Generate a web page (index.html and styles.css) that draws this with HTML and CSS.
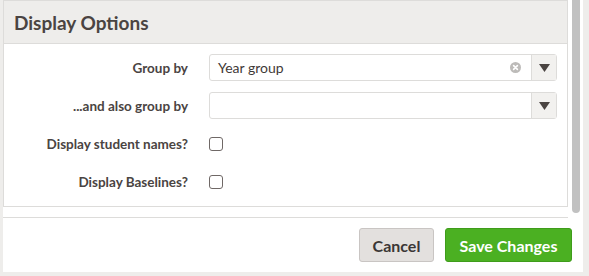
FILE: index.html
```html
<!DOCTYPE html>
<html>
<head>
<meta charset="utf-8">
<link rel="stylesheet" href="styles.css">
</head>
<body>
<div class="modal">
  <div class="scroll-area">
    <div class="scroll-content">
      <div class="panel">
        <div class="panel-header"><h2 class="panel-title">Display Options</h2></div>
        <div class="panel-body">
          <div class="form-row">
            <label class="form-label">Group by</label>
            <div class="select">
              <span class="select-value">Year group</span>
              <span class="select-clear">
                <svg width="11" height="11" viewBox="0 0 11 11"><circle cx="5.5" cy="5.5" r="5.5" fill="#bdbbb9"/><path d="M3.6 3.6 L7.4 7.4 M7.4 3.6 L3.6 7.4" stroke="#fff" stroke-width="1.6" stroke-linecap="round"/></svg>
              </span>
              <span class="select-arrow"><svg width="11" height="8" viewBox="0 0 11 8"><path d="M0 0 H11 L5.5 8 Z" fill="#4a4442"/></svg></span>
            </div>
          </div>
          <div class="form-row">
            <label class="form-label">...and also group by</label>
            <div class="select">
              <span class="select-value"></span>
              <span class="select-arrow"><svg width="11" height="8" viewBox="0 0 11 8"><path d="M0 0 H11 L5.5 8 Z" fill="#4a4442"/></svg></span>
            </div>
          </div>
          <div class="form-row">
            <label class="form-label">Display student names?</label>
            <span class="checkbox"></span>
          </div>
          <div class="form-row">
            <label class="form-label">Display Baselines?</label>
            <span class="checkbox"></span>
          </div>
        </div>
      </div>
    </div>
    <div class="scrollbar"><div class="scroll-thumb"></div></div>
  </div>
  <div class="footer">
    <button class="btn btn-cancel">Cancel</button>
    <button class="btn btn-save">Save Changes</button>
  </div>
</div>
</body>
</html>
```
FILE: styles.css
```css
* { box-sizing: border-box; }
html, body { margin: 0; padding: 0; }
body {
  background: #eeedeb;
  font-family: "Lato", "Open Sans", sans-serif;
  color: #4a4442;
  width: 589px;
  height: 276px;
  overflow: hidden;
}
.modal {
  margin-left: 3px;
  width: 580px;
  height: 272px;
  background: #fff;
  display: flex;
  flex-direction: column;
}
.scroll-area {
  display: flex;
  height: 218px;
}
.scroll-content {
  width: 565px;
  padding-bottom: 10px;
  border-bottom: 1px solid #dddcda;
}
.panel {
  border: 1px solid #dddcda;
  height: 207px;
}
.panel-header {
  height: 43px;
  background: #eeedeb;
  border-bottom: 1px solid #dddcda;
  display: flex;
  align-items: center;
  padding-left: 10px;
  padding-top: 1px;
}
.panel-title {
  margin: 0;
  font-size: 19px;
  font-weight: 700;
  color: #4a4442;
}
.panel-body {
  padding: 10px 10px 10px 0;
  display: flex;
  flex-direction: column;
  gap: 11px;
}
.form-row {
  display: flex;
  align-items: center;
  height: 27px;
}
.form-label {
  width: 184px;
  text-align: right;
  font-size: 13.5px;
  font-weight: 700;
  color: #4a4442;
  margin-right: 21px;
}
.select {
  flex: 1;
  height: 27px;
  border: 1px solid #dddcda;
  border-radius: 3px;
  display: flex;
  align-items: center;
  background: #fff;
}
.select-value {
  flex: 1;
  padding-left: 8px;
  font-size: 14px;
  color: #3f3a38;
}
.select-clear {
  display: flex;
  width: 16px;
  margin-right: 5px;
}
.select-arrow {
  width: 25px;
  height: 100%;
  background: #f2f1ef;
  border-left: 1px solid #dddcda;
  display: flex;
  align-items: center;
  justify-content: center;
}
.checkbox {
  width: 14px;
  height: 14px;
  border: 1.5px solid #6f6866;
  border-radius: 3px;
  background: #fff;
}
.scrollbar {
  width: 15px;
  padding: 0 3px 0 4px;
}
.scroll-thumb {
  width: 8px;
  height: 213px;
  background: #c1c1c1;
  border-radius: 0 0 4px 4px;
}
.footer {
  flex: 1;
  display: flex;
  justify-content: flex-end;
  align-items: center;
  gap: 11px;
  padding-right: 11px;
}
.btn {
  height: 34px;
  border-radius: 3px;
  font-family: inherit;
  font-size: 16px;
  font-weight: 700;
  padding: 0 8px;
  cursor: pointer;
}
.btn-cancel {
  width: 75px;
  background: #e3e0de;
  border: 1px solid #c9c5c3;
  color: #3b3736;
}
.btn-save {
  width: 127px;
  background: #4bb022;
  border: 1px solid #3f9c1b;
  color: #fff;
}
```
